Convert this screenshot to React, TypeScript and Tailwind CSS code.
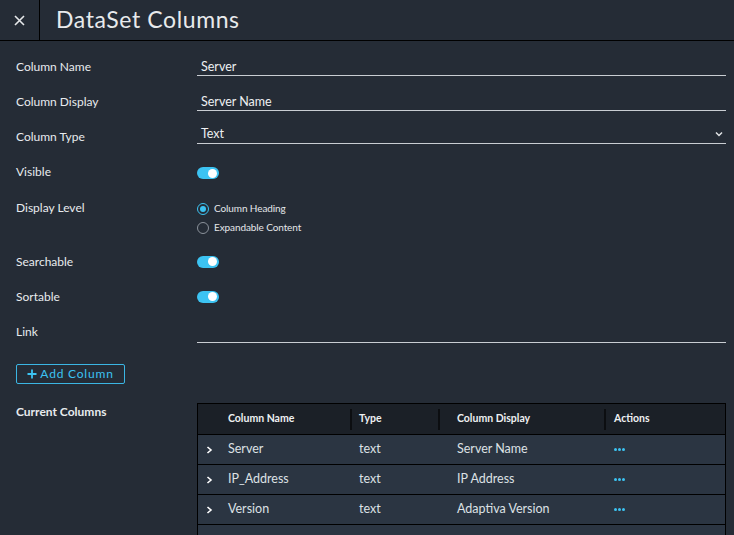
import { useState } from 'react';

type Col = { name: string; type: string; display: string };

const columns: Col[] = [
  { name: 'Server', type: 'text', display: 'Server Name' },
  { name: 'IP_Address', type: 'text', display: 'IP Address' },
  { name: 'Version', type: 'text', display: 'Adaptiva Version' },
];

const Toggle = ({ on }: { on: boolean }) => (
  <div className={`w-[22px] h-[12px] rounded-full flex items-center px-[2px] ${on ? 'bg-[#3cc3f2] justify-end' : 'bg-[#5b6470] justify-start'}`}>
    <div className="w-[9px] h-[9px] rounded-full bg-white" />
  </div>
);

const Radio = ({ checked, label }: { checked: boolean; label: string }) => (
  <div className="flex items-center gap-[5px] h-[19px]">
    <div className={`w-[12px] h-[12px] rounded-full border flex items-center justify-center ${checked ? 'border-[#3cc3f2]' : 'border-[#8b929b]'}`}>
      {checked && <div className="w-[6px] h-[6px] rounded-full bg-[#3cc3f2]" />}
    </div>
    <span className="text-[10px] text-[#e4e7ea] tracking-[-0.1px]">{label}</span>
  </div>
);

const Row = ({ label, children, className = 'h-[35px] items-center' }: { label: string; children?: React.ReactNode; className?: string }) => (
  <div className={`grid grid-cols-[181px_1fr] ${className}`}>
    <div className="text-[12px] text-[#e8ebee]">{label}</div>
    <div>{children}</div>
  </div>
);

const TextInput = ({ value }: { value: string }) => (
  <div className="h-[18px] border-b border-[#c9cdd2] pl-1 text-[12.5px] text-[#eef0f2] leading-[18px]">{value}</div>
);

const App = () => {
  const [visible, setVisible] = useState(true);

  return (
    <div className="w-[734px] h-[535px] overflow-hidden bg-[#252c36] font-['Lato','Noto_Sans',sans-serif]">
      {/* Header */}
      <div className="h-[41px] flex border-b border-black">
        <button className="w-[40px] h-full border-r border-black flex items-center justify-center text-[#e6e8ea]">
          <svg width="11" height="11" viewBox="0 0 11 11" stroke="currentColor" strokeWidth="1.6">
            <path d="M1 1 L10 10 M10 1 L1 10" />
          </svg>
        </button>
        <h1 className="pl-[16px] flex items-center text-[23px] text-[#e8eaec] tracking-[0.6px] pb-[2px]">DataSet Columns</h1>
      </div>

      {/* Form */}
      <div className="pl-4 pr-2 pt-[8px]">
        <Row label="Column Name"><TextInput value="Server" /></Row>
        <Row label="Column Display"><TextInput value="Server Name" /></Row>
        <Row label="Column Type">
          <div className="h-[19px] mb-[5px] border-b border-[#c9cdd2] pl-1 flex items-center justify-between text-[12.5px] text-[#eef0f2]">
            <span className="pt-[2px]">Text</span>
            <svg width="10" height="10" viewBox="0 0 10 10" fill="none" stroke="#e0e3e6" strokeWidth="1.5" className="mr-[2px]">
              <path d="M2 3.5 L5 6.5 L8 3.5" />
            </svg>
          </div>
        </Row>
        <Row label="Visible">
          <button onClick={() => setVisible(!visible)}><Toggle on={visible} /></button>
        </Row>
        <Row label="Display Level" className="h-[55px] items-start pt-[10px]">
          <div>
            <Radio checked label="Column Heading" />
            <Radio checked={false} label="Expandable Content" />
          </div>
        </Row>
        <Row label="Searchable"><Toggle on /></Row>
        <Row label="Sortable"><Toggle on /></Row>
        <Row label="Link">
          <div className="h-[20px] mt-[2px] border-b border-[#c9cdd2]" />
        </Row>

        <div className="mt-[15px]">
          <button className="w-[109px] h-[20px] border border-[#3bb6e4] rounded-[2px] flex items-center justify-center gap-[3px] text-[#3cc3f2] text-[12px] tracking-[0.8px]">
            <svg width="10" height="10" viewBox="0 0 10 10" stroke="currentColor" strokeWidth="1.8">
              <path d="M5 0.5 V9.5 M0.5 5 H9.5" />
            </svg>
            Add Column
          </button>
        </div>

        {/* Current columns */}
        <div className="grid grid-cols-[181px_1fr] mt-[19px]">
          <div className="text-[12px] font-bold text-[#e8ebee]">Current Columns</div>
          <div className="border border-black text-[#dde1e5]">
            <div className="h-[31px] bg-[#1b2027] grid grid-cols-[30px_124px_88px_166px_1fr] items-center text-[10.5px] font-bold text-[#eef0f2] border-b border-black">
              <div />
              <div className="flex items-center justify-between">
                <span>Column Name</span>
                <div className="w-[2px] h-[21px] bg-[#0c0e11]" />
              </div>
              <div className="flex items-center justify-between pl-[7px]">
                <span>Type</span>
                <div className="w-[2px] h-[21px] bg-[#0c0e11]" />
              </div>
              <div className="flex items-center justify-between pl-[17px]">
                <span>Column Display</span>
                <div className="w-[2px] h-[21px] bg-[#0c0e11]" />
              </div>
              <div className="pl-[8px]">Actions</div>
            </div>
            {columns.map(c => (
              <div key={c.name} className="h-[30px] bg-[#2b3542] grid grid-cols-[30px_124px_88px_166px_1fr] items-center text-[12.5px] border-b border-black">
                <div className="pl-[8px] text-white flex items-center">
                  <svg width="7" height="8" viewBox="0 0 7 8" fill="none" stroke="currentColor" strokeWidth="1.6">
                    <path d="M1.5 1 L5 4 L1.5 7" />
                  </svg>
                </div>
                <div>{c.name}</div>
                <div className="pl-[7px]">{c.type}</div>
                <div className="pl-[17px]">{c.display}</div>
                <div className="pl-[8px] flex gap-[1px]">
                  <span className="w-[3px] h-[3px] rounded-full bg-[#3cc3f2]" />
                  <span className="w-[3px] h-[3px] rounded-full bg-[#3cc3f2]" />
                  <span className="w-[3px] h-[3px] rounded-full bg-[#3cc3f2]" />
                </div>
              </div>
            ))}
            <div className="h-[30px] bg-[#2b3542]" />
          </div>
        </div>
      </div>
    </div>
  );
};

export default App;
